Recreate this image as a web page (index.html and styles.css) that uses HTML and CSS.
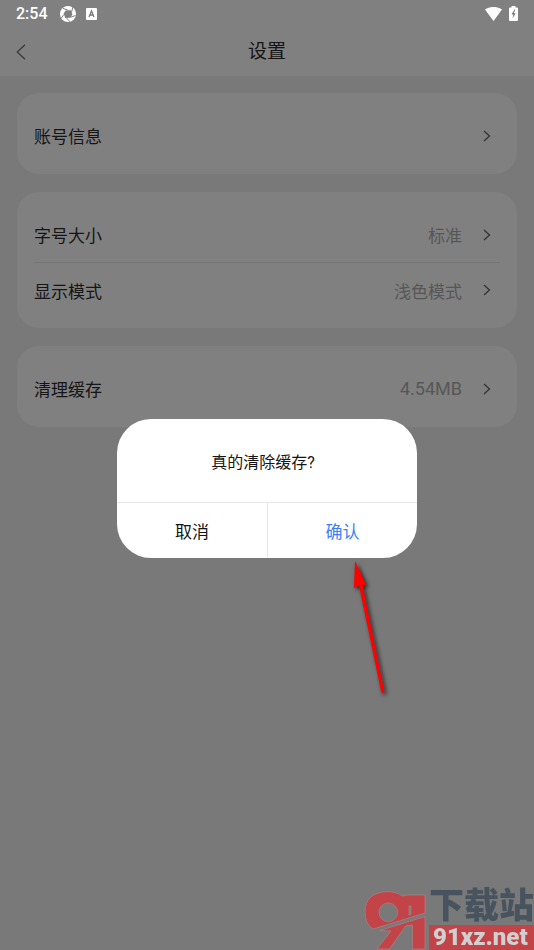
FILE: index.html
```html
<!DOCTYPE html>
<html lang="zh-CN">
<head>
<meta charset="utf-8">
<meta name="viewport" content="width=device-width, initial-scale=1">
<title>设置</title>
<link rel="stylesheet" href="styles.css">
</head>
<body>
<div class="app">
  <header class="top">
    <div class="status">
      <span class="clock">2:54</span>
      <svg class="ico-app" viewBox="0 0 16 16" aria-hidden="true"><circle cx="8" cy="8" r="8" fill="#fff"/><path d="M5.500 4.500 11 4.200 12.300 8.500 10.500 11.800 5.200 12 3.700 7.500Z" fill="#808080"/><path d="M8.500 4.400 2.800 2.300M11.500 6.500 12.800 1.200M10.800 11.200 15.500 9.500M6.500 12 10 15.800M4 8.500 1.200 12.200" stroke="#808080" stroke-width="1"/></svg>
      <svg class="ico-a" viewBox="0 0 11 12" aria-hidden="true"><rect width="11" height="12" rx="1" fill="#fff"/><path d="M3 9 5.500 3 8 9M4 7H7" fill="none" stroke="#777" stroke-width="1.3"/></svg>
      <span class="spacer"></span>
      <svg class="ico-wifi" viewBox="0 0 17 14" aria-hidden="true"><path d="M0 2.600C5-.9 12-.9 17 2.600L8.500 14Z" fill="#fff"/></svg>
      <svg class="ico-bat" viewBox="0 0 9 15" aria-hidden="true"><path d="M2.500 1.500V0h4v1.500H8q1 0 1 1V14q0 1-1 1H1q-1 0-1-1V2.500q0-1 1-1Z" fill="#fff"/><path d="M5.500 3.500 2.500 8.500H4.300L3.500 12.500 6.700 7.300H4.900L6.200 3.500Z" fill="#777"/></svg>
    </div>
    <div class="nav">
      <button class="back" type="button" aria-label="返回"><svg viewBox="0 0 10 16"><path d="M9 .8 1.200 8 9 15.200"/></svg></button>
      <h1>设置</h1>
    </div>
  </header>
  <main class="groups">
    <section class="card">
      <button class="row" type="button"><span>账号信息</span><svg class="chev" viewBox="0 0 8 12"><path d="M1 1 6.500 6 1 11"/></svg></button>
    </section>
    <section class="card">
      <button class="row" type="button"><span>字号大小</span><span class="value">标准</span><svg class="chev" viewBox="0 0 8 12"><path d="M1 1 6.500 6 1 11"/></svg></button>
      <button class="row" type="button"><span>显示模式</span><span class="value">浅色模式</span><svg class="chev" viewBox="0 0 8 12"><path d="M1 1 6.500 6 1 11"/></svg></button>
    </section>
    <section class="card">
      <button class="row" type="button"><span>清理缓存</span><span class="value size">4.54MB</span><svg class="chev" viewBox="0 0 8 12"><path d="M1 1 6.500 6 1 11"/></svg></button>
    </section>
  </main>
</div>

<div class="overlay">
  <div class="dialog" role="alertdialog" aria-modal="true" aria-labelledby="ask">
    <p id="ask">真的清除缓存?</p>
    <div class="actions">
      <button type="button">取消</button>
      <button type="button" class="confirm">确认</button>
    </div>
    <svg class="arrow" viewBox="0 0 60 150" aria-hidden="true"><path d="M16 10 15 37 20 34.500 42.500 142 45.500 141.500 23.500 33.500 27.500 34.500Z"/></svg>
  </div>
</div>

<div class="brand">
  <svg class="mark" viewBox="0 0 64 60" aria-hidden="true">
    <path fill="#c24448" stroke="#a9898a" stroke-width=".6" fill-rule="evenodd" d="M2 22C2 9 10 1.700 25 1.700Q34 1.700 39 6L45 5H62V23L10 39Q2 34 2 22ZM25.300 13A9.300 9.300 0 1 0 25.300 31.600 9.300 9.300 0 1 0 25.300 13ZM46 16V25L48 24.500V16Z"/>
    <path fill="#c24448" stroke="#a9898a" stroke-width=".6" d="M17 40.500 62 26.500V59H49.500V35L42.500 36 26.500 59H14L28 41Z"/>
  </svg>
  <div class="words">
    <span class="cn">下载站</span>
    <span class="url">91xz.net</span>
  </div>
</div>
</body>
</html>
```

FILE: styles.css
```css
* { box-sizing: border-box; }
body {
  margin: 0;
  background: #797979;
  color: #151515;
  font-family: Roboto, "Noto Sans CJK SC", sans-serif;
  font-size: 17px;
}
button { border: 0; padding: 0; background: none; color: inherit; font: inherit; }
svg { display: block; flex: none; }
.top { background: #808080; height: 76px; }
.status { display: flex; align-items: center; height: 27px; padding: 0 16px; color: #fff; }
.clock { font-size: 16px; font-weight: 500; }
.ico-app { width: 16px; height: 16px; margin-left: 12px; }
.ico-a { width: 11px; height: 12px; margin-left: 10px; }
.spacer { flex: 1; }
.ico-wifi { width: 17px; height: 14px; margin-right: 7px; }
.ico-bat { width: 9px; height: 15px; }
.nav { display: grid; grid-template-columns: 40px 1fr 40px; align-items: center; height: 49px; }
.back { justify-self: start; padding: 12px 16px; }
.back svg { width: 10px; height: 16px; fill: none; stroke: #383838; stroke-width: 1.2; }
h1 { margin: 0; text-align: center; font-size: 19px; font-weight: 400; line-height: 28px; }
.groups { display: flex; flex-direction: column; gap: 18px; padding: 17px; }
.card { padding: 15px 17px 11px; border-radius: 22px; background: #808080; }
.row { display: flex; align-items: center; width: 100%; height: 55px; padding-right: 9px; text-align: left; }
.row + .row { border-top: 1px solid #767676; }
.value { margin-left: auto; color: #575757; }
.size { font-size: 18px; }
.chev { width: 8px; height: 12px; margin-left: auto; fill: none; stroke: #333; stroke-width: 1.3; }
.value + .chev { margin-left: 21px; }
.overlay { position: fixed; inset: 0; display: flex; align-items: center; justify-content: center; padding-top: 26px; }
.dialog { position: relative; width: 56.200%; border-radius: 34px; background: #fff; }
.dialog p { margin: 0; padding: 32px 8px 27px 0; text-align: center; font-size: 16px; line-height: 24px; }
.actions { display: grid; grid-template-columns: 1fr 1fr; border-top: 1px solid #e8e8e8; }
.actions button { height: 55px; }
.confirm { border-left: 1px solid #e8e8e8; color: #3b82f6; }
.arrow { position: absolute; left: 74%; top: 132px; width: 60px; height: 150px; overflow: visible; fill: #f00; filter: drop-shadow(2px 2px 2px #222); }
.brand { position: fixed; right: 0; bottom: 0; display: flex; align-items: flex-end; width: 171px; }
.mark { width: 64px; height: 60px; }
.words { flex: 1; margin-left: 2px; }
.cn, .url { display: block; white-space: nowrap; }
.cn { color: #47545f; font-size: 35px; font-weight: 900; line-height: 36px; }
.url { height: 25px; padding-left: 4px; background: #c24448; color: #d0d0d0; font: 900 24px/25px Roboto, sans-serif; }
```
